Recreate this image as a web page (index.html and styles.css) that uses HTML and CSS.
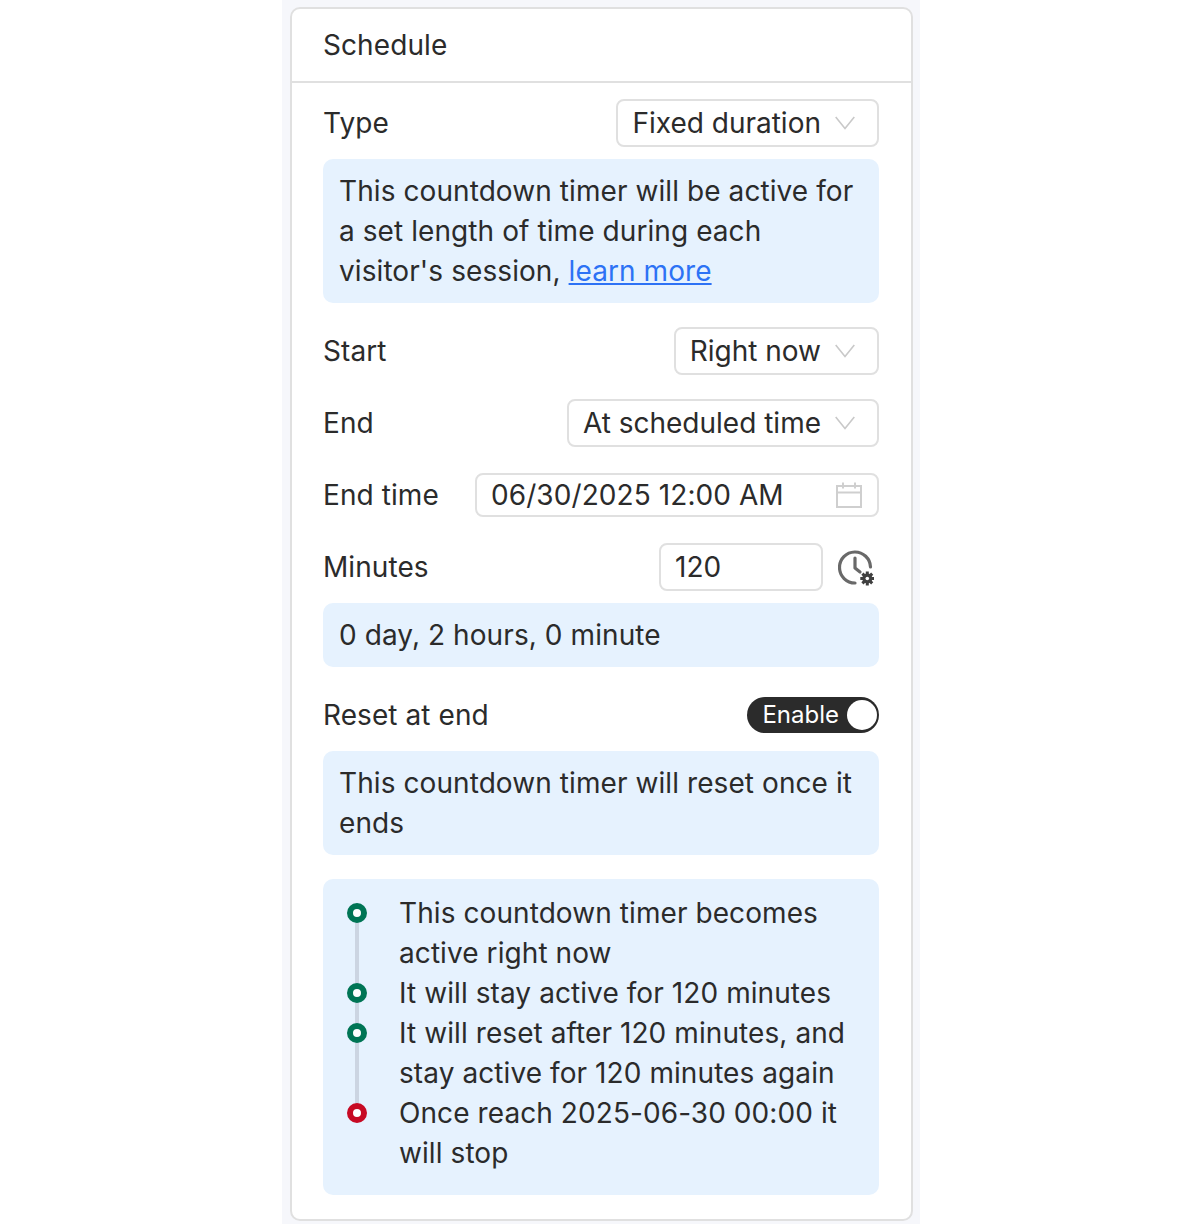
FILE: index.html
```html
<!DOCTYPE html>
<html lang="en">
<head>
  <meta charset="UTF-8">
  <meta name="viewport" content="width=device-width, initial-scale=1.0">
  <title>Schedule</title>
  <link rel="stylesheet" href="styles.css">
</head>
<body>
 <div class="panel">
  <div class="card">
    <div class="card-title">Schedule</div>
    <div class="card-body">

      <div class="row">
        <span class="label">Type</span>
        <div class="select">Fixed duration
          <svg class="chevron" width="20" height="14" viewBox="0 0 20 14"><path d="M0.7 1 L10 12.5 L19.3 1" fill="none" stroke="#c9c9c9" stroke-width="1.6"/></svg>
        </div>
      </div>
      <div class="note note-type">This countdown timer will be active for a set length of time during each visitor's session, <a href="#">learn more</a></div>

      <div class="row row-start">
        <span class="label">Start</span>
        <div class="select">Right now
          <svg class="chevron" width="20" height="14" viewBox="0 0 20 14"><path d="M0.7 1 L10 12.5 L19.3 1" fill="none" stroke="#c9c9c9" stroke-width="1.6"/></svg>
        </div>
      </div>

      <div class="row row-end">
        <span class="label">End</span>
        <div class="select">At scheduled time
          <svg class="chevron" width="20" height="14" viewBox="0 0 20 14"><path d="M0.7 1 L10 12.5 L19.3 1" fill="none" stroke="#c9c9c9" stroke-width="1.6"/></svg>
        </div>
      </div>

      <div class="row row-time">
        <span class="label">End time</span>
        <div class="date-input">06/30/2025 12:00 AM
          <svg width="26" height="26" viewBox="0 0 26 26" fill="none" stroke="#cfcfcf" stroke-width="2"><rect x="1" y="4" width="24" height="21"/><path d="M1 10.5 H25 M7 0.5 V6.5 M19 0.5 V6.5"/></svg>
        </div>
      </div>

      <div class="row row-minutes">
        <span class="label">Minutes</span>
        <div class="minutes">
          <div class="number-input">120</div>
          <svg class="clock-gear" width="36" height="36" viewBox="0 0 36 36">
            <path d="M17 33 A15.5 15.5 0 1 1 32.5 17" fill="none" stroke="#696969" stroke-width="3.2" stroke-linecap="round"/>
            <path d="M17 8 V18 L22 22" fill="none" stroke="#696969" stroke-width="3.2" stroke-linecap="round" stroke-linejoin="round"/>
            <path d="M29.3 21.5 V35.5 M22.3 28.5 H36 M24.4 23.6 L34.2 33.4 M34.2 23.6 L24.4 33.4" stroke="#404040" stroke-width="3"/>
            <circle cx="29.3" cy="28.5" r="5" fill="#404040"/>
            <circle cx="29.3" cy="28.5" r="1.8" fill="#fff"/>
          </svg>
        </div>
      </div>
      <div class="note note-minutes">0 day, 2 hours, 0 minute</div>

      <div class="row row-reset">
        <span class="label">Reset at end</span>
        <div class="toggle">Enable<span class="knob"></span></div>
      </div>
      <div class="note note-reset">This countdown timer will reset once it ends</div>

      <ul class="note timeline">
        <li class="step">This countdown timer becomes active right now</li>
        <li class="step">It will stay active for 120 minutes</li>
        <li class="step">It will reset after 120 minutes, and stay active for 120 minutes again</li>
        <li class="step step-stop">Once reach 2025-06-30 00:00 it will stop</li>
      </ul>

    </div>
  </div>
 </div>
</body>
</html>
```

FILE: styles.css
```css
body {
  margin: 0;
  padding: 0;
  height: 1224px;
  overflow: hidden;
  background-color: #fff;
  font-family: Inter, "Liberation Sans", sans-serif;
  font-size: 28px;
  line-height: 40px;
  letter-spacing: 0.08px;
  color: #2b2b2b;
}

.panel {
  box-sizing: border-box;
  width: 638px;
  height: 1224px;
  margin-left: 282px;
  padding: 7px 7px 0 8px;
  background-color: #f6f7fb;
}

.card {
  box-sizing: border-box;
  height: 1214px;
  background: #fff;
  border: 2px solid #e0e0e0;
  border-radius: 10px;
}

.card-title {
  height: 74px;
  box-sizing: border-box;
  padding: 16px 31px;
  border-bottom: 2px solid #e0e0e0;
}

.card-body {
  padding: 16px 32px 0 31px;
}

.row {
  display: flex;
  justify-content: space-between;
  align-items: center;
}

.select {
  display: flex;
  align-items: center;
  gap: 14px;
  box-sizing: border-box;
  height: 48px;
  padding: 0 22px 0 14px;
  border: 2px solid #e0e0e0;
  border-radius: 8px;
  letter-spacing: 0;
  white-space: nowrap;
}

.chevron {
  flex: none;
}

.note {
  margin: 12px 0 0;
  padding: 12px 16px;
  background-color: #e6f2fe;
  border-radius: 10px;
}

.note a {
  color: #2d72f5;
}

.row-start {
  margin-top: 24px;
}

.row-end {
  margin-top: 24px;
}

.row-time {
  margin-top: 26px;
}

.row-minutes {
  margin-top: 26px;
}

.date-input {
  display: flex;
  justify-content: space-between;
  align-items: center;
  box-sizing: border-box;
  width: 404px;
  height: 44px;
  padding: 0 15px 0 14px;
  border: 2px solid #e0e0e0;
  border-radius: 8px;
}

.minutes {
  display: flex;
  align-items: center;
  gap: 15px;
  padding-right: 5px;
}

.number-input {
  box-sizing: border-box;
  width: 164px;
  height: 48px;
  padding: 2px 14px;
  border: 2px solid #e0e0e0;
  border-radius: 8px;
}

.clock-gear {
  margin-top: 1px;
}

.row-reset {
  margin-top: 28px;
}

.toggle {
  display: flex;
  align-items: center;
  gap: 8px;
  height: 36px;
  padding: 0 2px 0 15px;
  background-color: #2b2b2b;
  border-radius: 18px;
  color: #fff;
  font-size: 24px;
  letter-spacing: 0;
}

.knob {
  width: 30px;
  height: 30px;
  border-radius: 50%;
  background-color: #fff;
}

.note-reset {
  margin-top: 16px;
}

.timeline {
  margin-top: 24px;
  padding: 14px 32px 22px 76px;
  list-style: none;
}

.step {
  position: relative;
}

/* connector runs from this dot down to the next one */
.step::after {
  content: "";
  position: absolute;
  left: -44px;
  top: 20px;
  bottom: -20px;
  width: 4px;
  background-color: #ccd5e2;
}

.step:last-child::after {
  display: none;
}

.step::before {
  content: "";
  position: absolute;
  z-index: 1;
  left: -52px;
  top: 10px;
  width: 8px;
  height: 8px;
  background-color: #fff;
  border: 6px solid #007555;
  border-radius: 50%;
}

.step-stop::before {
  border-color: #c70a24;
}
```
